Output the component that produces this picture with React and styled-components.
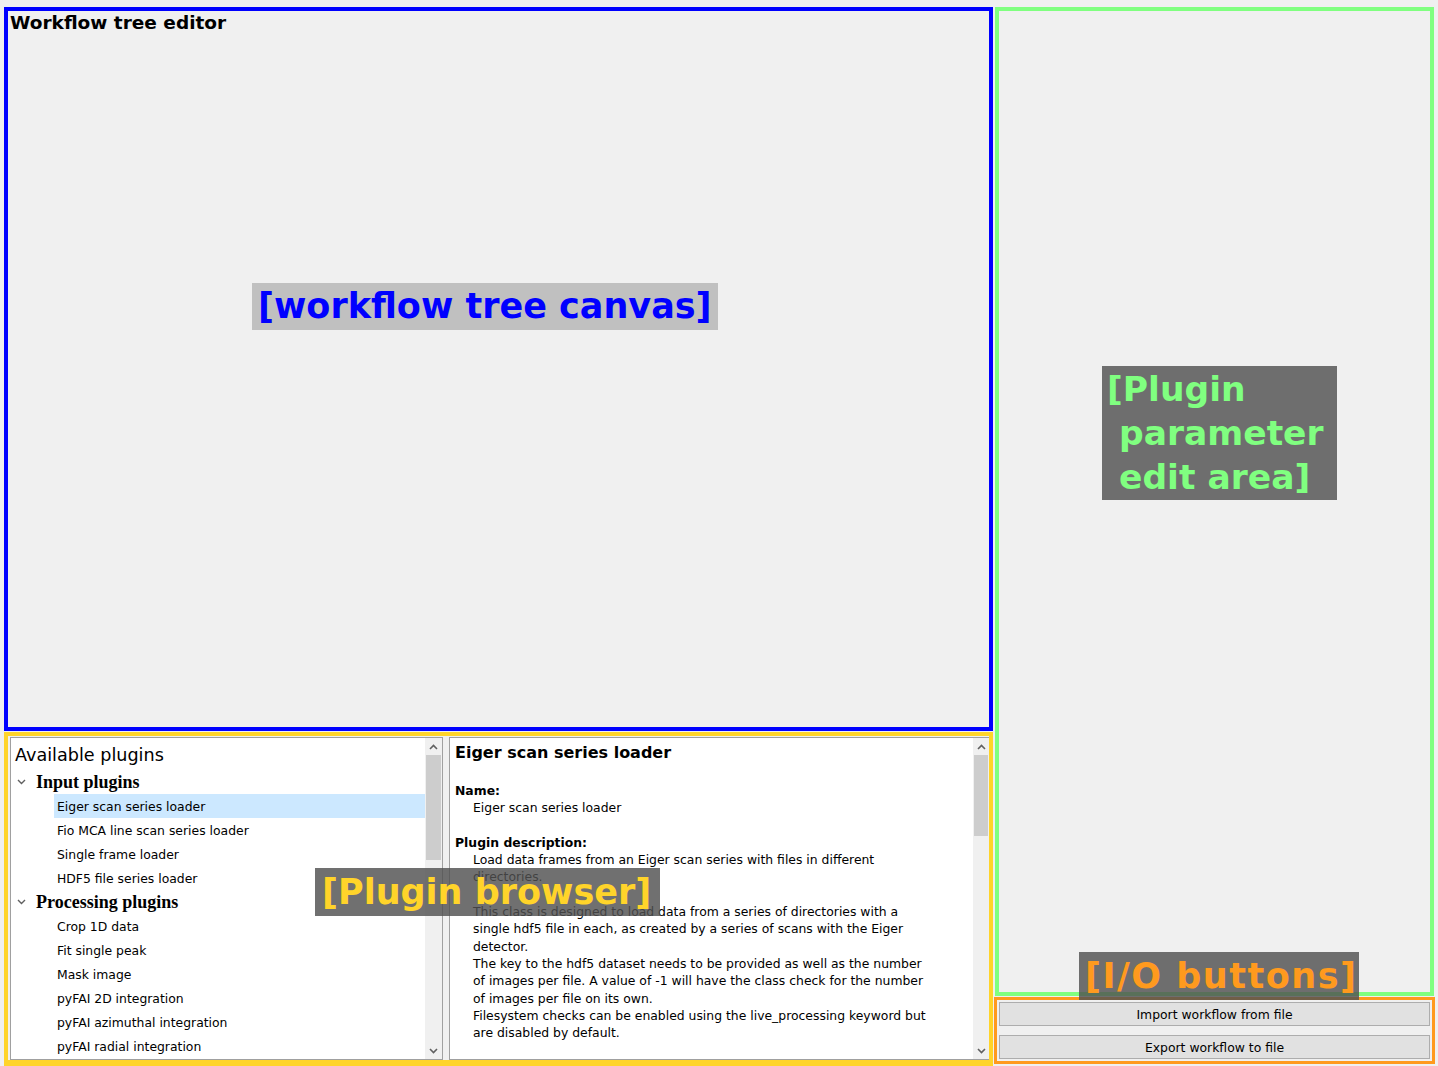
import React from "react";
import styled, { createGlobalStyle } from "styled-components";

const Global = createGlobalStyle`
  html, body { margin: 0; padding: 0; background: #f0f0f0; }
  body { font-family: "DejaVu Sans", "Liberation Sans", sans-serif; color: #000; }
  * { box-sizing: border-box; }
`;

const Page = styled.div`
  position: relative;
  width: 1438px;
  height: 1066px;
  overflow: hidden;
  background: #f0f0f0;
  display: grid;
  grid-template-columns: 989px 439px;
  column-gap: 2px;
  padding: 7px 4px 0 4px;
`;

const LeftColumn = styled.div`
  display: flex;
  flex-direction: column;
  gap: 1px;
  min-height: 0;
`;

const RightColumn = styled.div`
  display: flex;
  flex-direction: column;
  gap: 1px;
  min-height: 0;
`;

const CanvasFrame = styled.section`
  height: 724px;
  border: 4px solid #0000ff;
  padding: 1px 2px 0 2px;
`;

const CanvasTitle = styled.h1`
  margin: 0;
  font-size: 18.5px;
  line-height: 22px;
  font-weight: bold;
  font-family: "DejaVu Sans", sans-serif;
`;

const BrowserFrame = styled.section`
  flex: 1;
  min-height: 0;
  border: 4px solid #ffd42a;
  border-bottom-width: 6px;
  padding: 1px 0 0 2px;
  display: grid;
  grid-template-columns: 433px 6px 1fr;
`;

const Splitter = styled.div`
  background: #f0f0f0;
`;

const TreePanel = styled.div`
  background: #fff;
  border: 1px solid #a0a0a0;
  display: grid;
  grid-template-columns: 1fr 17px;
  min-height: 0;
  overflow: hidden;
`;

const TreeList = styled.div`
  display: flex;
  flex-direction: column;
  font-size: 12.4px;
`;

const TreeTitle = styled.div`
  height: 32px;
  display: flex;
  align-items: center;
  padding-left: 4px;
  font-size: 17.6px;
  padding-top: 1px;
`;

const GroupRow = styled.div`
  height: 24px;
  display: flex;
  align-items: center;
  padding-left: 6px;
  gap: 10px;
  font-family: "Liberation Serif", "Times New Roman", serif;
  font-weight: bold;
  font-size: 18px;
`;

const ItemRow = styled.div`
  height: 24px;
  display: flex;
  align-items: center;
  margin-left: 43px;
  padding-left: 3px;
  background: ${(p) => (p.$selected ? "#cce8ff" : "transparent")};
  white-space: nowrap;
`;

const ScrollBar = styled.div`
  background: #f0f0f0;
  display: grid;
  grid-template-rows: 17px ${(p) => p.$thumb}px 1fr 17px;
`;

const ScrollButton = styled.div`
  display: flex;
  align-items: center;
  justify-content: center;
`;

const ScrollThumb = styled.div`
  background: #cdcdcd;
  margin: 0 1px;
`;

const DescPanel = styled.div`
  background: #fff;
  border: 1px solid #a0a0a0;
  border-right: none;
  display: grid;
  grid-template-columns: 1fr 16px;
  min-height: 0;
  overflow: hidden;
`;

const DescBody = styled.div`
  padding: 5px 4px 0 5px;
  font-size: 12.4px;
  line-height: 17.3px;
`;

const DescTitle = styled.h2`
  margin: 0 0 19px 0;
  font-size: 16px;
  line-height: 20px;
  font-weight: bold;
`;

const DescLabel = styled.div`
  font-weight: bold;
`;

const DescText = styled.div`
  padding-left: 18px;
  white-space: nowrap;
  margin-bottom: ${(p) => (p.$gap ? "17.3px" : "0")};
`;

const ParamFrame = styled.section`
  height: 989px;
  border: 4px solid #80ff80;
`;

const IOFrame = styled.section`
  height: 67px;
  margin: 0 -1px;
  border: 3px solid #ff9a1e;
  padding: 2px 2px;
  display: flex;
  flex-direction: column;
  gap: 9px;
`;

const IOButton = styled.button`
  height: 24px;
  width: 100%;
  margin: 0;
  background: #e1e1e1;
  border: 1px solid #adadad;
  font-family: "DejaVu Sans", sans-serif;
  font-size: 12.4px;
  color: #000;
  padding: 0;
`;

const Note = styled.div`
  position: absolute;
  left: ${(p) => p.$left}px;
  top: ${(p) => p.$top}px;
  width: ${(p) => p.$width}px;
  height: ${(p) => p.$height}px;
  background: ${(p) => p.$bg || "rgba(80, 80, 80, 0.82)"};
  color: ${(p) => p.$color};
  font-family: "DejaVu Sans", "Verdana", sans-serif;
  font-weight: bold;
  font-size: ${(p) => p.$size || 34}px;
  letter-spacing: ${(p) => p.$track || 0}px;
  line-height: ${(p) => p.$line || 48}px;
  padding: ${(p) => p.$pad || "0 0 0 6px"};
  white-space: pre;
`;

const Chevron = () => (
  <svg width="9" height="6" viewBox="0 0 9 6">
    <path d="M1 1 L4.5 4.5 L8 1" fill="none" stroke="#606060" strokeWidth="1.4" />
  </svg>
);

const Caret = ({ up }) => (
  <svg width="9" height="6" viewBox="0 0 9 6">
    <path
      d={up ? "M1 5 L4.5 1.5 L8 5" : "M1 1 L4.5 4.5 L8 1"}
      fill="none"
      stroke="#606060"
      strokeWidth="1.6"
    />
  </svg>
);

const inputPlugins = [
  "Eiger scan series loader",
  "Fio MCA line scan series loader",
  "Single frame loader",
  "HDF5 file series loader",
];

const processingPlugins = [
  "Crop 1D data",
  "Fit single peak",
  "Mask image",
  "pyFAI 2D integration",
  "pyFAI azimuthal integration",
  "pyFAI radial integration",
];

const descLines = [
  ["Load data frames from an Eiger scan series with files in different", false],
  ["directories.", true],
  ["This class is designed to load data from a series of directories with a", false],
  ["single hdf5 file in each, as created by a series of scans with the Eiger", false],
  ["detector.", false],
  ["The key to the hdf5 dataset needs to be provided as well as the number", false],
  ["of images per file. A value of -1 will have the class check for the number", false],
  ["of images per file on its own.", false],
  ["Filesystem checks can be enabled using the live_processing keyword but", false],
  ["are disabled by default.", false],
];

export default function App() {
  return (
    <>
      <Global />
      <Page>
        <LeftColumn>
          <CanvasFrame>
            <CanvasTitle>Workflow tree editor</CanvasTitle>
          </CanvasFrame>
          <BrowserFrame>
            <TreePanel>
              <TreeList>
                <TreeTitle>Available plugins</TreeTitle>
                <GroupRow>
                  <Chevron />
                  Input plugins
                </GroupRow>
                {inputPlugins.map((name, i) => (
                  <ItemRow key={name} $selected={i === 0}>
                    {name}
                  </ItemRow>
                ))}
                <GroupRow>
                  <Chevron />
                  Processing plugins
                </GroupRow>
                {processingPlugins.map((name) => (
                  <ItemRow key={name}>{name}</ItemRow>
                ))}
              </TreeList>
              <ScrollBar $thumb={105}>
                <ScrollButton>
                  <Caret up />
                </ScrollButton>
                <ScrollThumb />
                <div />
                <ScrollButton>
                  <Caret />
                </ScrollButton>
              </ScrollBar>
            </TreePanel>
            <Splitter />
            <DescPanel>
              <DescBody>
                <DescTitle>Eiger scan series loader</DescTitle>
                <DescLabel>Name:</DescLabel>
                <DescText $gap>Eiger scan series loader</DescText>
                <DescLabel>Plugin description:</DescLabel>
                {descLines.map(([line, gap]) => (
                  <DescText key={line} $gap={gap}>
                    {line}
                  </DescText>
                ))}
              </DescBody>
              <ScrollBar $thumb={81}>
                <ScrollButton>
                  <Caret up />
                </ScrollButton>
                <ScrollThumb />
                <div />
                <ScrollButton>
                  <Caret />
                </ScrollButton>
              </ScrollBar>
            </DescPanel>
          </BrowserFrame>
        </LeftColumn>
        <RightColumn>
          <ParamFrame />
          <IOFrame>
            <IOButton>Import workflow from file</IOButton>
            <IOButton>Export workflow to file</IOButton>
          </IOFrame>
        </RightColumn>

        <Note $left={252} $top={283} $width={466} $height={47} $bg="#c0c0c0" $color="#0000ff" $size={35} $line={47}>
          [workflow tree canvas]
        </Note>
        <Note
          $left={1102}
          $top={366}
          $width={235}
          $height={134}
          $color="#80ff80"
          $size={34.5}
          $line={44}
          $pad="1px 0 0 5px"
        >
          {"[Plugin\n parameter\n edit area]"}
        </Note>
        <Note $left={315} $top={868} $width={345} $height={48} $color="#ffd42a" $size={35} $pad="0 0 0 7px">
          [Plugin browser]
        </Note>
        <Note $left={1079} $top={952} $width={280} $height={48} $color="#ff9a1e" $size={35} $track={1.5}>
          [I/O buttons]
        </Note>
      </Page>
    </>
  );
}
